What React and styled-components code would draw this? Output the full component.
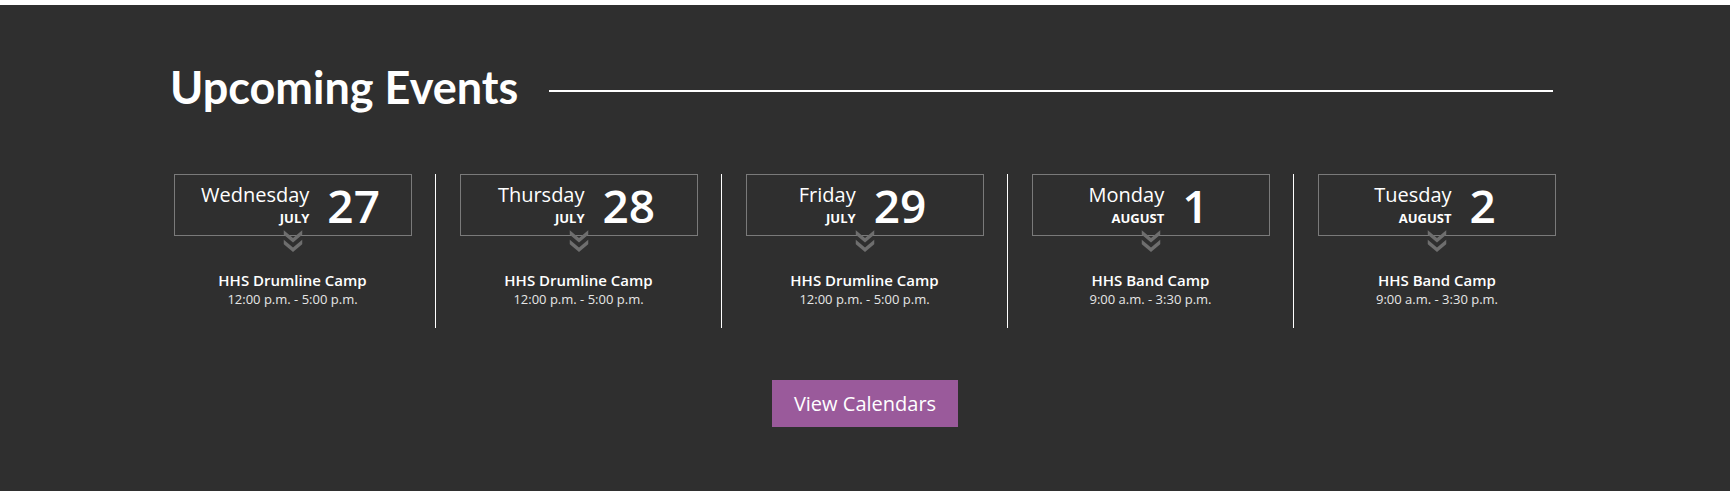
import styled, { createGlobalStyle } from "styled-components";

const GlobalStyle = createGlobalStyle`
	body {
		margin: 0;
		background: #fff;
		font-family: "Open Sans", "Liberation Sans", sans-serif;
	}
`;

const events = [
	{ day: "Wednesday", month: "July", date: 27, title: "HHS Drumline Camp", time: "12:00 p.m. - 5:00 p.m." },
	{ day: "Thursday", month: "July", date: 28, title: "HHS Drumline Camp", time: "12:00 p.m. - 5:00 p.m." },
	{ day: "Friday", month: "July", date: 29, title: "HHS Drumline Camp", time: "12:00 p.m. - 5:00 p.m." },
	{ day: "Monday", month: "August", date: 1, title: "HHS Band Camp", time: "9:00 a.m. - 3:30 p.m." },
	{ day: "Tuesday", month: "August", date: 2, title: "HHS Band Camp", time: "9:00 a.m. - 3:30 p.m." },
];

function App() {
	return (
		<>
			<GlobalStyle />
			<Section>
				<Container>
					<HeadingRow>
						<Heading>Upcoming Events</Heading>
						<Rule />
					</HeadingRow>
					<EventList>
						{events.map((ev, index) => (
							<EventColumn key={index} last={index === events.length - 1}>
								<DateBox>
									<DayBlock>
										<DayName>{ev.day}</DayName>
										<Month>{ev.month}</Month>
									</DayBlock>
									<DateNumber>{ev.date}</DateNumber>
									<Chevron viewBox='0 0 19 22'>
										<polygon points='0,0 9.5,8 19,0 19,4.5 9.5,12.5 0,4.5' />
										<polygon points='0,9.5 9.5,17.5 19,9.5 19,14 9.5,22 0,14' />
									</Chevron>
								</DateBox>
								<EventTitle>{ev.title}</EventTitle>
								<EventTime>{ev.time}</EventTime>
							</EventColumn>
						))}
					</EventList>
					<ButtonRow>
						<CalendarButton>View Calendars</CalendarButton>
					</ButtonRow>
				</Container>
			</Section>
		</>
	);
}

const Section = styled.section`
	margin-top: 5px;
	height: 486px;
	box-sizing: border-box;
	background-color: #2f2f2f;
	padding-top: 55px;
`;

const Container = styled.div`
	width: 1430px;
	margin: 0 auto;
`;

const HeadingRow = styled.div`
	display: flex;
	align-items: center;
	height: 54px;
	padding: 0 27px 0 20px;
`;

const Heading = styled.h2`
	margin: 0;
	font-family: "Lato", sans-serif;
	font-weight: 700;
	font-size: 45px;
	line-height: 54px;
	color: #fff;
	white-space: nowrap;
`;

const Rule = styled.div`
	flex: 1;
	height: 2px;
	margin: 8px 0 0 31px;
	background-color: #fff;
`;

const EventList = styled.div`
	display: grid;
	grid-template-columns: repeat(5, 286px);
	margin-top: 60px;
`;

const EventColumn = styled.div`
	box-sizing: border-box;
	height: 154px;
	border-right: ${(props) => (props.last ? "none" : "1px solid #fff")};
	text-align: center;
`;

const DateBox = styled.div`
	position: relative;
	box-sizing: border-box;
	width: 238px;
	height: 62px;
	margin: 0 auto;
	border: 1px solid #7a7a7a;
	display: flex;
	justify-content: center;
	align-items: flex-start;
	gap: 18px;
	padding-right: 4px;
`;

const DayBlock = styled.div`
	display: flex;
	flex-direction: column;
	align-items: flex-end;
	padding-top: 8px;
`;

const DayName = styled.span`
	font-size: 20px;
	line-height: 24px;
	color: #fff;
`;

const Month = styled.span`
	font-size: 13px;
	line-height: 23px;
	font-weight: 700;
	text-transform: uppercase;
	color: #fff;
`;

const DateNumber = styled.span`
	font-size: 46px;
	line-height: 46px;
	font-weight: 600;
	color: #fff;
	margin-top: 7px;
`;

const Chevron = styled.svg`
	position: absolute;
	left: 50%;
	bottom: -17px;
	width: 19px;
	height: 22px;
	transform: translateX(-50%);
	fill: #6e6e6e;
`;

const EventTitle = styled.div`
	margin-top: 34px;
	font-size: 15px;
	line-height: 20px;
	font-weight: 600;
	color: #fff;
`;

const EventTime = styled.div`
	margin-top: 1px;
	font-size: 13px;
	line-height: 17px;
	color: #e6e6e6;
`;

const ButtonRow = styled.div`
	display: flex;
	justify-content: center;
	margin-top: 52px;
`;

const CalendarButton = styled.button`
	all: unset;
	box-sizing: border-box;
	width: 186px;
	height: 47px;
	text-align: center;
	font-family: "Open Sans", sans-serif;
	font-size: 20px;
	line-height: 47px;
	color: #fff;
	background-color: #9a5a9b;
	cursor: pointer;
`;

export default App;
